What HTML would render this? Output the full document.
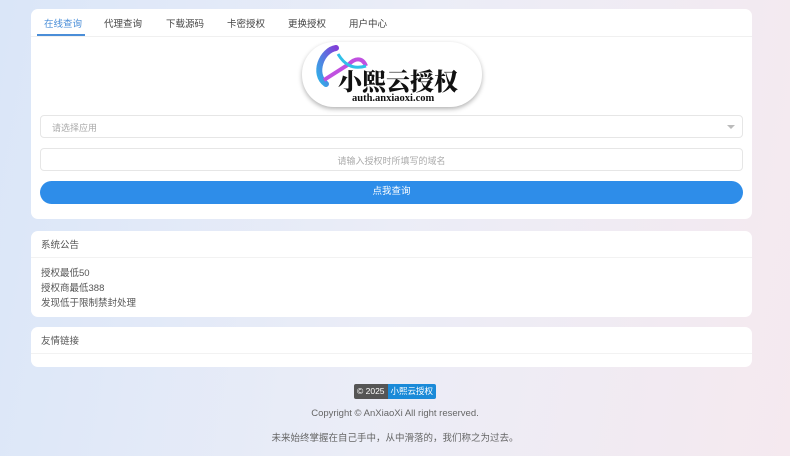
<!DOCTYPE html>
<html><head><meta charset="utf-8"><style>
*{margin:0;padding:0;box-sizing:border-box}
body{width:790px;height:456px;overflow:hidden;font-family:"Liberation Sans","Noto Sans CJK SC",sans-serif;background:linear-gradient(100deg,#dae6f8 0%,#ebedf7 50%,#f5e9ef 100%);position:relative;color:#555}
.card{position:absolute;left:31px;width:721px;background:#fff;border-radius:7px}
.tabs{height:28px;border-bottom:1px solid #f0f0f0;position:relative;font-size:9.5px;color:#444}
.tabs span{position:absolute;top:7px}
.ul{position:absolute;left:6px;top:25px;width:48px;height:2px;background:#4a8ed8}
.box{position:absolute;left:9px;width:703px;height:23px;border:1px solid #e6e6e6;border-radius:4px;font-size:9px;color:#aaa}
.hd{font-size:9.5px;color:#555;padding:6px 10px;height:27px;border-bottom:1px solid #f2f2f2}
.ln{font-size:9.5px;color:#555;position:absolute;left:10px}
.ft{position:absolute;left:0;width:790px;text-align:center;font-size:9.5px;color:#666}
</style></head><body>
<div class="card" style="top:9px;height:210px">
<div class="tabs">
<span style="left:13px;color:#4a8ed8">在线查询</span>
<span style="left:73px">代理查询</span>
<span style="left:135px">下载源码</span>
<span style="left:196px">卡密授权</span>
<span style="left:257px">更换授权</span>
<span style="left:318px">用户中心</span>
<div class="ul"></div>
</div>
<div style="position:absolute;left:271px;top:33px;width:180px;height:65px;border-radius:32px;background:#fff;box-shadow:0 2px 5px rgba(0,0,0,.3);overflow:hidden">
<svg width="80" height="45" style="position:absolute;left:2px;top:2px" viewBox="0 0 80 45"><path d="M22 40 C8 30 18 6 32 4" stroke="url(#g)" stroke-width="6" fill="none" stroke-linecap="round"/><path d="M20 36 L45 20 C50 15 58 12 62 22" stroke="#c050e0" stroke-width="4" fill="none"/><path d="M34 10 C40 20 48 26 62 22" stroke="#30c0e8" stroke-width="3" fill="none"/><defs><linearGradient id="g" x1="0" y1="1" x2="1" y2="0"><stop offset="0" stop-color="#30b0e8"/><stop offset="1" stop-color="#8040d8"/></linearGradient></defs></svg>
<div style="position:absolute;left:36px;top:24px;font-family:'Noto Serif CJK SC',serif;font-weight:900;font-size:24px;line-height:28px;color:#111">小熙云授权</div>
<div style="position:absolute;left:50px;top:51px;font-family:'Liberation Serif',serif;font-weight:bold;font-size:10.5px;color:#111">auth.anxiaoxi.com</div>
</div>
<div class="box" style="top:106px;padding:5px 11px">请选择应用<span style="position:absolute;right:7px;top:9px;border:4px solid transparent;border-top-color:#bbb;width:0;height:0"></span></div>
<div class="box" style="top:139px;text-align:center;padding-top:5px">请输入授权时所填写的域名</div>
<div style="position:absolute;left:9px;top:172px;width:703px;height:23px;border-radius:12px;background:#2e8de9;color:#fff;font-size:9.5px;text-align:center;line-height:22px">点我查询</div>
</div>
<div class="card" style="top:231px;height:86px">
<div class="hd">系统公告</div>
<div class="ln" style="top:34px">授权最低50</div>
<div class="ln" style="top:49px">授权商最低388</div>
<div class="ln" style="top:64px">发现低于限制禁封处理</div>
</div>
<div class="card" style="top:327px;height:40px">
<div class="hd">友情链接</div>
</div>
<div style="position:absolute;left:354px;top:384px;height:15px;font-size:8.5px;color:#fff;display:flex;border-radius:2px;overflow:hidden;line-height:15px">
<span style="background:#555;padding:0 3px">© 2025</span><span style="background:#1a8ad8;padding:0 3px">小熙云授权</span></div>
<div class="ft" style="top:408px">Copyright © AnXiaoXi All right reserved.</div>
<div class="ft" style="top:430px">未来始终掌握在自己手中，从中滑落的，我们称之为过去。</div>
</body></html>
